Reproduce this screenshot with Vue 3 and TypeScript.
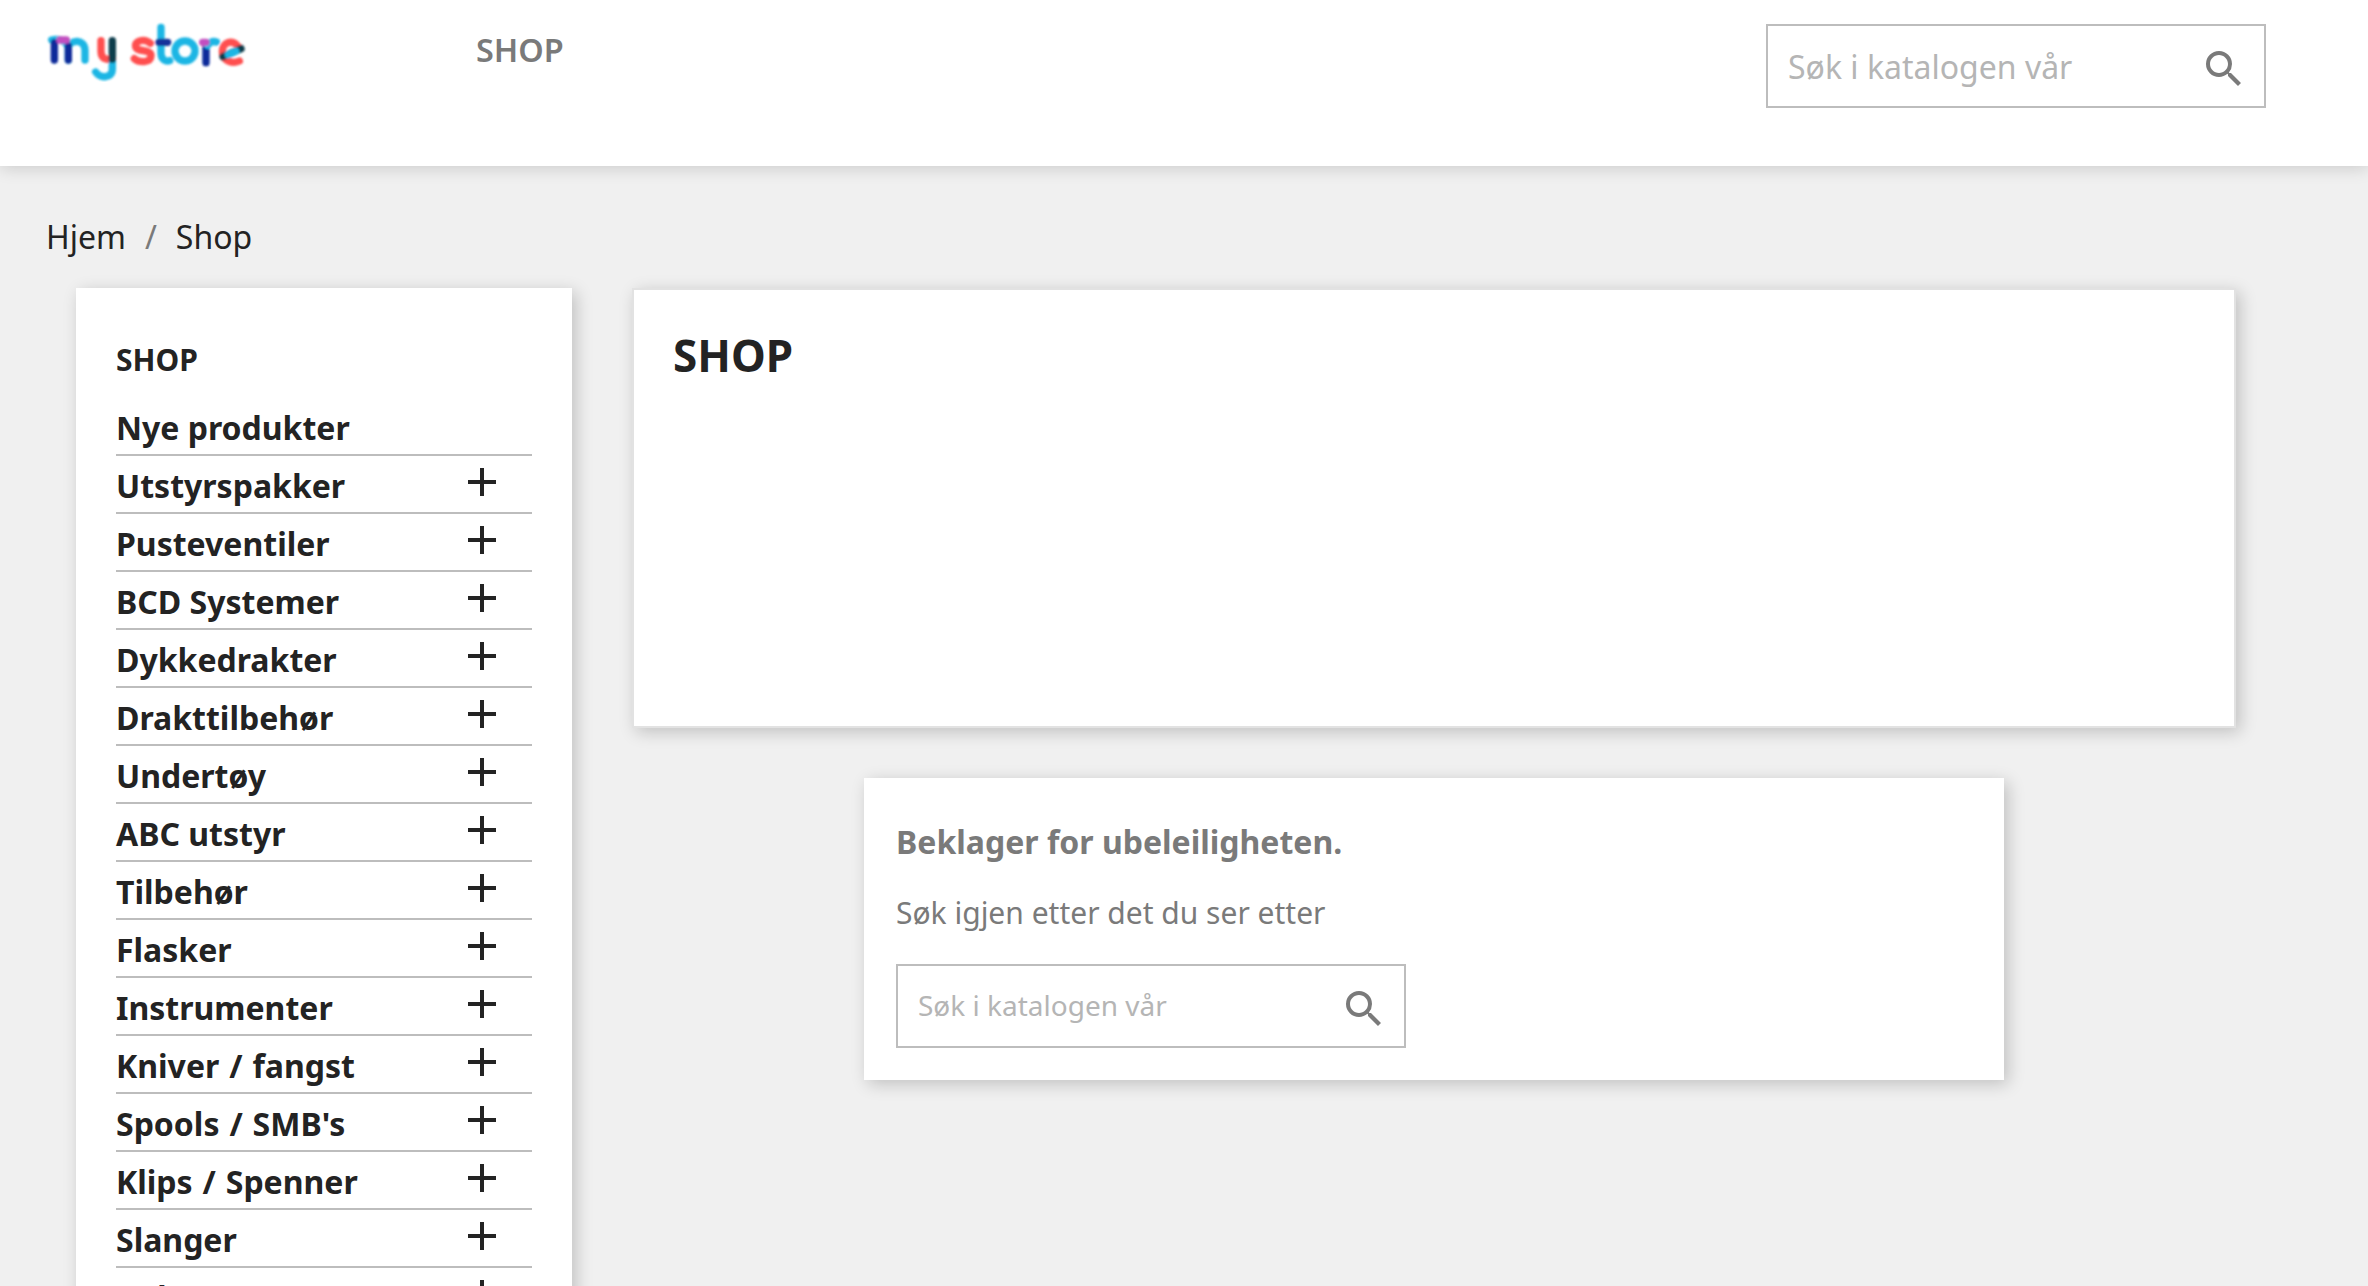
<script setup lang="ts">
const labels: string[] = [
  'Utstyrspakker',
  'Pusteventiler',
  'BCD Systemer',
  'Dykkedrakter',
  'Drakttilbehør',
  'Undertøy',
  'ABC utstyr',
  'Tilbehør',
  'Flasker',
  'Instrumenter',
  'Kniver / fangst',
  "Spools / SMB's",
  'Klips / Spenner',
  'Slanger',
  'Bøker',
]
</script>

<template>
  <div class="page">
    <header class="topbar">
      <a class="logo" aria-label="my store">
        <svg width="240" height="80" viewBox="0 0 720 240" fill="none" stroke-linecap="round">
          <defs>
            <filter id="soft"><feGaussianBlur stdDeviation="3" /></filter>
          </defs>
          <g stroke-width="22" filter="url(#soft)">
            <path d="M80 90 C100 84 122 92 130 110 V150" stroke="#1fb6e4" />
            <path d="M130 110 C138 90 178 84 180 120 V150" stroke="#1fb6e4" />
            <path d="M88 98 V150" stroke="#0a2a9a" />
            <path d="M130 108 V150" stroke="#0a2a9a" />
            <path d="M105 90 H124" stroke="#c24fc0" />
            <path d="M228 92 V125 C228 148 250 152 262 145" stroke="#ff4f4f" />
            <path d="M262 150 V178 C262 206 226 206 212 186" stroke="#1fb6e4" />
            <path d="M262 92 V148" stroke="#0c3c4c" />
            <path d="M376 100 C358 84 328 92 332 110 C336 128 380 116 378 138 C376 160 342 158 328 146" stroke="#ff4f4f" />
            <path d="M408 52 V130 C408 150 424 156 434 152" stroke="#1fb6e4" />
            <path d="M402 97 H428" stroke="#17309a" />
            <circle cx="480" cy="123" r="30" stroke="#1fb6e4" />
            <path d="M543 100 V158" stroke="#0a2a9a" />
            <path d="M548 106 C554 96 564 92 574 96" stroke="#1fb6e4" />
            <path d="M533 97 H543" stroke="#c24fc0" />
            <path d="M643 153 C618 164 592 150 592 124 C592 96 624 86 640 110" stroke="#ff4f4f" />
            <path d="M594 140 L648 116" stroke="#0c3c4c" />
            <path d="M610 134 L632 124" stroke="#1fb6e4" />
          </g>
        </svg>
      </a>
      <nav class="menu">SHOP</nav>
      <div class="search search-top">
        <span class="ph">Søk i katalogen vår</span>
        <svg class="glass" viewBox="0 0 24 24" width="48" height="48"><path d="M15.5 14h-.79l-.28-.27A6.47 6.47 0 0 0 16 9.5 6.5 6.5 0 1 0 9.5 16c1.61 0 3.09-.59 4.23-1.57l.27.28v.79l5 4.99L20.49 19l-4.99-5zm-6 0C7.01 14 5 11.99 5 9.5S7.01 5 9.5 5 14 7.01 14 9.5 11.99 14 9.5 14z" /></svg>
      </div>
    </header>

    <div class="crumbs"><span>Hjem</span><i>/</i><span>Shop</span></div>

    <div class="columns">
      <aside class="side card">
        <h2>SHOP</h2>
        <ul>
          <li><span>Nye produkter</span></li>
          <li v-for="label in labels" :key="label" :class="{ slash: label.includes('/') }">
            <span>{{ label }}</span>
            <svg viewBox="0 0 24 24" width="48" height="48"><path d="M19 13h-6v6h-2v-6H5v-2h6V5h2v6h6v2z" /></svg>
          </li>
        </ul>
      </aside>

      <main class="content">
        <section class="hero card"><h1>SHOP</h1></section>
        <section class="none card">
          <h3>Beklager for ubeleiligheten.</h3>
          <p>Søk igjen etter det du ser etter</p>
          <div class="search search-low">
            <span class="ph">Søk i katalogen vår</span>
            <svg class="glass" viewBox="0 0 24 24" width="48" height="48"><path d="M15.5 14h-.79l-.28-.27A6.47 6.47 0 0 0 16 9.5 6.5 6.5 0 1 0 9.5 16c1.61 0 3.09-.59 4.23-1.57l.27.28v.79l5 4.99L20.49 19l-4.99-5zm-6 0C7.01 14 5 11.99 5 9.5S7.01 5 9.5 5 14 7.01 14 9.5 11.99 14 9.5 14z" /></svg>
          </div>
        </section>
      </main>
    </div>
  </div>
</template>

<style>
html, body { margin: 0; overflow: hidden; background: #f0f0f0; }
</style>

<style scoped>
.page { width: 2368px; height: 1286px; overflow: hidden; background: #f0f0f0; font-family: "Noto Sans", sans-serif; color: #232323; }
.topbar { height: 166px; background: #fff; box-shadow: 0 2px 16px rgba(0,0,0,.16); display: flex; align-items: flex-start; box-sizing: border-box; padding: 0 102px 0 25px; position: relative; }
.logo { width: 240px; height: 80px; margin-top: 10px; display: block; }
.logo svg { display: block; }
.menu { margin: 27px 0 0 211px; font-size: 32.4px; line-height: 44px; font-weight: 600; color: #7a7a7a; }
.search { box-sizing: border-box; border: 2px solid #bdbdbd; display: flex; align-items: center; justify-content: space-between; background: #fff; }
.search-top { width: 500px; height: 84px; margin: 24px 0 0 auto; padding: 0 16px 0 20px; }
.search-top .ph { font-size: 32px; color: #b5b5b5; }
.search-low { width: 510px; height: 84px; padding: 0 16px 0 20px; }
.search-low .ph { font-size: 28px; color: #b5b5b5; margin-top: -2px; }
.glass { fill: #7a7a7a; display: block; margin-top: 6px; }
.crumbs { display: flex; gap: 19px; padding: 48px 0 0 46px; height: 40px; font-size: 32px; line-height: 46px; }
.crumbs i { font-style: normal; color: #7a7a7a; }
.columns { display: flex; align-items: flex-start; margin-top: 34px; padding-left: 76px; }
.card { background: #fff; box-shadow: 4px 4px 16px rgba(0,0,0,.2); }
.side { width: 496px; box-sizing: border-box; padding: 50px 40px 0; flex: none; }
.side h2 { margin: 0 0 16px; font-size: 30px; line-height: 44px; font-weight: 700; }
.side ul { margin: 0; padding: 0; list-style: none; }
.side li { height: 58px; box-sizing: border-box; border-bottom: 2px solid #bdbdbd; font-size: 32px; font-weight: 700; line-height: 60px; position: relative; }
.side li.slash { word-spacing: 1.6px; }
.side li svg { position: absolute; left: 342px; top: 2px; fill: #232323; }
.content { margin-left: 60px; width: 1604px; display: flex; flex-direction: column; align-items: center; }
.hero { width: 100%; height: 440px; box-sizing: border-box; border: 2px solid #e2e2e2; padding: 35px 39px; }
.hero h1 { margin: 0; font-size: 44px; line-height: 60px; font-weight: 700; }
.none { width: 1140px; height: 302px; margin-top: 50px; box-sizing: border-box; padding: 42px 32px 0; color: #7a7a7a; }
.none h3 { margin: 0; font-size: 32px; line-height: 44px; font-weight: 700; }
.none p { margin: 27px 0 0; font-size: 30px; line-height: 44px; }
.none .search { margin-top: 29px; }
</style>
